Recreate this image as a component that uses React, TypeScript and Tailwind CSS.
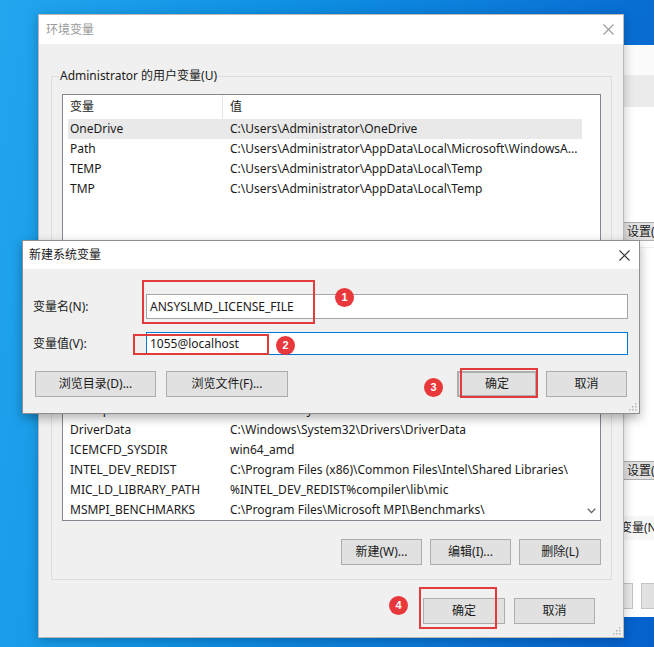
import React from 'react';

// 环境变量 窗口 + 新建系统变量 对话框（含红色标注）

type Row = [string, string];

const FONT = "font-['Segoe_UI','Noto_Sans','Noto_Sans_CJK_SC',sans-serif]";

const userRows: Row[] = [
  ['OneDrive', 'C:\\Users\\Administrator\\OneDrive'],
  ['Path', 'C:\\Users\\Administrator\\AppData\\Local\\Microsoft\\WindowsA...'],
  ['TEMP', 'C:\\Users\\Administrator\\AppData\\Local\\Temp'],
  ['TMP', 'C:\\Users\\Administrator\\AppData\\Local\\Temp'],
];

const systemRows: Row[] = [
  ['ANSYS201_DIR', 'C:\\Program Files\\ANSYS Inc\\v201\\ANSYS'],
  ['ANSYSLIC_DIR', 'C:\\Program Files\\ANSYS Inc\\Shared Files\\Licensing'],
  ['ComSpec', 'C:\\Windows\\system32\\cmd.exe'],
  ['DriverData', 'C:\\Windows\\System32\\Drivers\\DriverData'],
  ['ICEMCFD_SYSDIR', 'win64_amd'],
  ['INTEL_DEV_REDIST', 'C:\\Program Files (x86)\\Common Files\\Intel\\Shared Libraries\\'],
  ['MIC_LD_LIBRARY_PATH', '%INTEL_DEV_REDIST%compiler\\lib\\mic'],
  ['MSMPI_BENCHMARKS', 'C:\\Program Files\\Microsoft MPI\\Benchmarks\\'],
];

const CloseIcon = ({ color }: { color: string }) => (
  <svg width="11" height="11" viewBox="0 0 11 11">
    <path d="M0.5 0.5 L10.5 10.5 M10.5 0.5 L0.5 10.5" stroke={color} strokeWidth="1.1" fill="none" />
  </svg>
);

const Grip = () => (
  <svg width="8" height="8" viewBox="0 0 8 8" className="absolute right-[2px] bottom-[2px]">
    {[
      [6, 0],
      [3, 3],
      [6, 3],
      [0, 6],
      [3, 6],
      [6, 6],
    ].map(([x, y], i) => (
      <rect key={i} x={x} y={y} width="1.5" height="1.5" fill="#b4b4b4" />
    ))}
  </svg>
);

const Btn = ({
  children,
  className = '',
}: {
  children: React.ReactNode;
  className?: string;
}) => (
  <div
    className={`h-[26px] flex items-center justify-center bg-[#e1e1e1] border border-[#adadad] text-[12px] leading-none text-[#1a1a1a] ${className}`}
  >
    {children}
  </div>
);

const ListView = ({
  rows,
  height,
  selected = -1,
  scroll = false,
}: {
  rows: Row[];
  height: number;
  selected?: number;
  scroll?: boolean;
}) => (
  <div className="flex border border-[#828790] bg-white overflow-hidden" style={{ height }}>
    <div className="w-[519px] flex flex-col">
      <div className="h-[24px] shrink-0 flex text-[12px] text-[#1a1a1a]">
        <div className="w-[160px] pl-[7px] flex items-center border-r border-[#e5e5e5]">变量</div>
        <div className="flex-1 pl-[7px] flex items-center">值</div>
      </div>
      <div className="flex flex-col">
        {rows.map(([name, value], i) => (
          <div key={name} className="h-[20px] shrink-0 pl-[5px] flex">
            <div
              className={`flex-1 flex items-center text-[12px] text-[#1a1a1a] whitespace-nowrap ${
                i === selected ? 'bg-[#e9e9e9]' : ''
              }`}
            >
              <div className="w-[155px] pl-[2px]">{name}</div>
              <div className="flex-1 pl-[7px] overflow-hidden">{value}</div>
            </div>
          </div>
        ))}
      </div>
    </div>
    <div className="flex-1 flex flex-col justify-end items-center pb-[6px]">
      {scroll && (
        <svg width="9" height="6" viewBox="0 0 9 6">
          <path d="M0.8 0.8 L4.5 4.6 L8.2 0.8" stroke="#606060" strokeWidth="1.3" fill="none" />
        </svg>
      )}
    </div>
  </div>
);

const GroupBox = ({
  label,
  children,
  className = '',
}: {
  label: string;
  children: React.ReactNode;
  className?: string;
}) => (
  <div className={`relative border border-[#dcdcdc] px-[10px] pt-[17px] ${className}`}>
    <span className="absolute left-[7px] -top-[9px] px-[1px] bg-[#f0f0f0] text-[12px] leading-[16px] text-[#1a1a1a] whitespace-nowrap">
      {label}
    </span>
    {children}
  </div>
);

const RedBox = ({ className }: { className: string }) => (
  <div className={`absolute border-2 border-[#e23b3b] ${className}`} />
);

const Badge = ({ n, className }: { n: number; className: string }) => (
  <div
    className={`absolute w-[19px] h-[19px] rounded-full bg-[#e8383b] text-white text-[11px] font-bold leading-none flex items-center justify-center font-['Liberation_Sans',sans-serif] ${className}`}
  >
    {n}
  </div>
);

export default function App() {
  return (
    <div
      className={`relative w-[654px] h-[647px] overflow-hidden bg-[linear-gradient(100deg,#22a6ee_0%,#0f92e4_35%,#0a74d6_75%,#0560cc_100%)] ${FONT}`}
    >
      {/* 背后的窗口（右侧露出部分） */}
      <div className="absolute left-[624px] top-[45px] w-[40px] h-[572px] bg-white flex flex-col text-[12px] text-[#1a1a1a]">
        <div className="h-[30px] bg-[#fbfbfb]" />
        <div className="h-[32px] bg-[#ebebeb]" />
        <div className="h-[115px]" />
        <div className="h-[19px] -ml-[1px] bg-[#e1e1e1] border border-[#adadad] flex items-center pl-[3px] whitespace-nowrap leading-none">
          设置(
        </div>
        <div className="h-[214px] border-t border-[#f0f0f0] mt-[6px]" />
        <div className="h-[19px] -ml-[1px] bg-[#e1e1e1] border border-[#adadad] flex items-center pl-[3px] whitespace-nowrap leading-none">
          设置(
        </div>
        <div className="h-[36px]" />
        <div className="h-[24px] bg-[#f7f7f7] flex items-center -ml-[4px] whitespace-nowrap leading-none">
          变量(N
        </div>
        <div className="h-[43px]" />
        <div className="h-[26px] flex gap-[8px]">
          <div className="w-[10px] -ml-[1px] bg-[#e9e9e9] border border-[#c4c4c4]" />
          <div className="flex-1 bg-[#e1e1e1] border border-[#c4c4c4]" />
        </div>
      </div>

      {/* 环境变量 主窗口 */}
      <div className="absolute left-[38px] top-[14px] w-[586px] h-[624px] flex flex-col border border-[#b9b9b9] shadow-[0_2px_10px_rgba(0,0,0,0.25)]">
        <div className="h-[29px] shrink-0 bg-white flex items-center justify-between pl-[7px] pr-[9px]">
          <span className="text-[12px] text-[#9a9a9a]">环境变量</span>
          <CloseIcon color="#9a9a9a" />
        </div>
        <div className="relative flex-1 bg-[#f0f0f0] pl-[12px] pr-[11px] pt-[32px] flex flex-col">
          <GroupBox label="Administrator 的用户变量(U)" className="h-[216px]">
            <ListView rows={userRows} height={150} selected={0} />
            <div className="flex justify-end gap-[9px] mt-[10px]">
              <Btn className="w-[81px]">新建(N)...</Btn>
              <Btn className="w-[81px]">编辑(E)...</Btn>
              <Btn className="w-[82px]">删除(D)</Btn>
            </div>
          </GroupBox>
          <GroupBox label="系统变量(S)" className="h-[263px] mt-[25px]">
            <ListView rows={systemRows} height={186} scroll />
            <div className="flex justify-end gap-[8px] mt-[18px]">
              <Btn className="w-[81px]">新建(W)...</Btn>
              <Btn className="w-[81px]">编辑(I)...</Btn>
              <Btn className="w-[82px]">删除(L)</Btn>
            </div>
          </GroupBox>
          <div className="flex justify-end gap-[9px] mt-[18px] pr-[17px]">
            <Btn className="w-[82px]">确定</Btn>
            <Btn className="w-[81px]">取消</Btn>
          </div>
          <Grip />
        </div>
      </div>

      {/* 新建系统变量 对话框 */}
      <div className="absolute left-[22px] top-[240px] w-[618px] h-[174px] flex flex-col border border-[#8e8e8e] shadow-[0_4px_10px_rgba(0,0,0,0.3)]">
        <div className="h-[28px] shrink-0 bg-white flex items-center justify-between pl-[6px] pr-[9px]">
          <span className="text-[12px] text-[#1a1a1a]">新建系统变量</span>
          <CloseIcon color="#333333" />
        </div>
        <div className="relative flex-1 bg-[#f0f0f0] pt-[25px] pl-[10px] pr-[11px] flex flex-col text-[12px] text-[#1a1a1a]">
          <div className="flex items-center h-[25px]">
            <span className="w-[113px] leading-none">变量名(N):</span>
            <div className="flex-1 h-full bg-white border border-[#a5a5a5] flex items-center pl-[3px] leading-none">
              ANSYSLMD_LICENSE_FILE
            </div>
          </div>
          <div className="flex items-center h-[23px] mt-[13px]">
            <span className="w-[113px] leading-none">变量值(V):</span>
            <div className="flex-1 h-full bg-white border border-[#0078d7] flex items-center pl-[3px] leading-none">
              1055@localhost
            </div>
          </div>
          <div className="flex items-center mt-[16px] pl-[2px] pr-[1px]">
            <Btn className="w-[121px]">浏览目录(D)...</Btn>
            <Btn className="w-[122px] ml-[10px]">浏览文件(F)...</Btn>
            <div className="flex-1" />
            <Btn className="w-[80px] border-[#0078d7] border-2">确定</Btn>
            <Btn className="w-[81px] ml-[9px]">取消</Btn>
          </div>
          <Grip />
        </div>
      </div>

      {/* 红色标注 */}
      <RedBox className="left-[142px] top-[280px] w-[173px] h-[44px]" />
      <RedBox className="left-[133px] top-[334px] w-[136px] h-[21px]" />
      <RedBox className="left-[460px] top-[368px] w-[78px] h-[30px]" />
      <RedBox className="left-[419px] top-[587px] w-[78px] h-[42px]" />
      <Badge n={1} className="left-[335px] top-[288px]" />
      <Badge n={2} className="left-[276px] top-[336px]" />
      <Badge n={3} className="left-[424px] top-[378px]" />
      <Badge n={4} className="left-[389px] top-[596px]" />
    </div>
  );
}
